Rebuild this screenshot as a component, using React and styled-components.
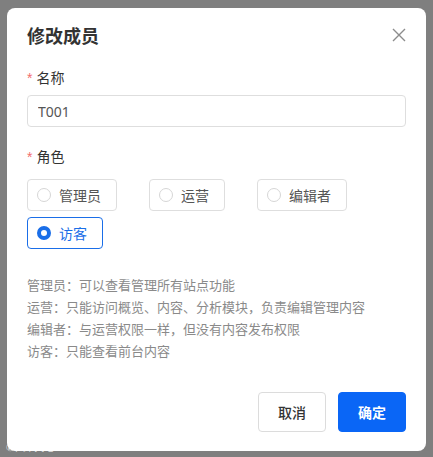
import React, { useState } from 'react';
import styled, { createGlobalStyle } from 'styled-components';

const GlobalStyle = createGlobalStyle`
  html, body {
    margin: 0;
    padding: 0;
    background: #7f7f7f;
  }
  body {
    font-family: "Noto Sans CJK SC", "Noto Sans", sans-serif;
  }
`;

const Overlay = styled.div`
  position: relative;
  width: 433px;
  height: 457px;
  background: #7f7f7f;
  padding: 8px 7px 6px;
  box-sizing: border-box;
`;

const Modal = styled.div`
  width: 419px;
  height: 443px;
  background: #fff;
  border-radius: 8px;
  box-sizing: border-box;
  padding: 14px 20px 19px;
  display: flex;
  flex-direction: column;
`;

const Header = styled.div`
  display: flex;
  align-items: center;
  justify-content: space-between;
  height: 26px;
  margin-bottom: 18px;
`;

const Title = styled.h2`
  margin: 0;
  font-size: 18px;
  line-height: 26px;
  font-weight: 700;
  color: #333;
`;

const CloseButton = styled.button`
  border: 0;
  background: none;
  padding: 0;
  width: 14px;
  height: 14px;
  cursor: pointer;
  display: flex;
`;

const Label = styled.div`
  font-size: 14px;
  line-height: 22px;
  color: #333;
  margin-bottom: ${(p) => p.$gap}px;
`;

const Required = styled.span`
  color: #f26d6d;
  margin-right: 4px;
  font-family: "Liberation Sans", sans-serif;
`;

const Input = styled.input`
  box-sizing: border-box;
  width: 100%;
  height: 32px;
  border: 1px solid #dedede;
  border-radius: 4px;
  padding: 0 10px;
  font-family: "Noto Sans", "Noto Sans CJK SC", sans-serif;
  font-size: 14px;
  color: #555;
  outline: none;
  margin-bottom: 18px;
`;

const RadioGroup = styled.div`
  display: flex;
  flex-wrap: wrap;
  column-gap: 32px;
  row-gap: 6px;
  margin-bottom: 25px;
`;

const RadioButton = styled.button`
  box-sizing: border-box;
  height: 32px;
  display: flex;
  align-items: center;
  gap: 8px;
  padding: 0 15px 0 9px;
  background: #fff;
  border: 1px solid ${(p) => (p.$active ? '#1a6ee8' : '#dedede')};
  border-radius: 4px;
  font-family: inherit;
  font-size: 14px;
  color: ${(p) => (p.$active ? '#1a6ee8' : '#555')};
  cursor: pointer;
`;

const Dot = styled.span`
  box-sizing: border-box;
  width: 14px;
  height: 14px;
  border-radius: 50%;
  border: ${(p) => (p.$active ? '4px solid #1a6ee8' : '1px solid #d6d6d6')};
  background: #fff;
`;

const Notes = styled.div`
  font-size: 13px;
  line-height: 22px;
  color: #8a8a8a;
`;

const Footer = styled.div`
  margin-top: auto;
  display: flex;
  justify-content: flex-end;
  gap: 12px;
`;

const Button = styled.button`
  box-sizing: border-box;
  width: 68px;
  height: 40px;
  border-radius: 4px;
  font-family: inherit;
  font-size: 14px;
  font-weight: ${(p) => (p.$primary ? 700 : 500)};
  border: 1px solid ${(p) => (p.$primary ? '#0a66f6' : '#dcdcdc')};
  background: ${(p) => (p.$primary ? '#0a66f6' : '#fff')};
  color: ${(p) => (p.$primary ? '#fff' : '#333')};
  cursor: pointer;
`;

const Watermark = styled.div`
  position: absolute;
  left: 6px;
  bottom: 4px;
  font-size: 10px;
  line-height: 12px;
  color: rgba(255, 255, 255, 0.8);
  letter-spacing: -0.5px;
`;

const roles = ['管理员', '运营', '编辑者', '访客'];

const notes = [
  '管理员：可以查看管理所有站点功能',
  '运营：只能访问概览、内容、分析模块，负责编辑管理内容',
  '编辑者：与运营权限一样，但没有内容发布权限',
  '访客：只能查看前台内容',
];

export default function App() {
  const [role, setRole] = useState('访客');
  return (
    <>
      <GlobalStyle />
      <Overlay>
        <Modal>
          <Header>
            <Title>修改成员</Title>
            <CloseButton aria-label="关闭">
              <svg width="14" height="14" viewBox="0 0 14 14">
                <path d="M1 1L13 13M13 1L1 13" stroke="#8c8c8c" strokeWidth="1.4" fill="none" />
              </svg>
            </CloseButton>
          </Header>
          <Label $gap={6}>
            <Required>*</Required>名称
          </Label>
          <Input defaultValue="T001" />
          <Label $gap={11}>
            <Required>*</Required>角色
          </Label>
          <RadioGroup>
            {roles.map((r) => (
              <RadioButton key={r} $active={role === r} onClick={() => setRole(r)}>
                <Dot $active={role === r} />
                {r}
              </RadioButton>
            ))}
          </RadioGroup>
          <Notes>
            {notes.map((n) => (
              <div key={n}>{n}</div>
            ))}
          </Notes>
          <Footer>
            <Button>取消</Button>
            <Button $primary>确定</Button>
          </Footer>
        </Modal>
        <Watermark>✆ 六维天地</Watermark>
      </Overlay>
    </>
  );
}
